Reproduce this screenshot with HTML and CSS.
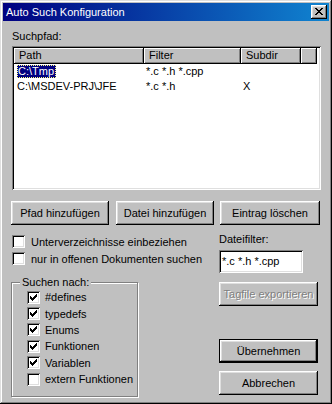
FILE: index.html
```html
<!DOCTYPE html>
<html lang="de">
<head>
    <meta charset="UTF-8">
    <title>Auto Such Konfiguration</title>
    <link rel="stylesheet" href="styles.css">
</head>
<body>

    <div class="window">
        <div class="titlebar">
            <span class="title">Auto Such Konfiguration</span>
            <button class="close-btn" aria-label="Schließen">
                <svg width="8" height="7" viewBox="0 0 8 7" shape-rendering="crispEdges">
                    <path d="M0 0h2v1h1v1h2v-1h1v-1h2v1h-1v1h-1v1h-1v1h1v1h1v1h1v1h-2v-1h-1v-1h-2v1h-1v1h-2v-1h1v-1h1v-1h1v-1h-1v-1h-1v-1h-1z" fill="#000"/>
                </svg>
            </button>
        </div>

        <div class="content">
            <div class="label">Suchpfad:</div>

            <div class="listview">
                <div class="lv-header">
                    <div class="lv-col col-path">Path</div>
                    <div class="lv-col col-filter">Filter</div>
                    <div class="lv-col col-subdir">Subdir</div>
                    <div class="lv-col col-rest"></div>
                </div>
                <div class="lv-row">
                    <div class="lv-cell col-path"><span class="selected">C:\Tmp</span></div>
                    <div class="lv-cell col-filter">*.c *.h *.cpp</div>
                    <div class="lv-cell col-subdir"></div>
                </div>
                <div class="lv-row">
                    <div class="lv-cell col-path">C:\MSDEV-PRJ\JFE</div>
                    <div class="lv-cell col-filter">*.c *.h</div>
                    <div class="lv-cell col-subdir">X</div>
                </div>
            </div>

            <div class="button-row">
                <button class="btn btn-pfad">Pfad hinzufügen</button>
                <button class="btn btn-datei">Datei hinzufügen</button>
                <button class="btn btn-loeschen">Eintrag löschen</button>
            </div>

            <div class="lower">
                <div class="left-col">
                    <label class="check"><span class="box"></span>Unterverzeichnisse einbeziehen</label>
                    <label class="check"><span class="box"></span>nur in offenen Dokumenten suchen</label>

                    <div class="group">
                        <span class="group-title">Suchen nach:</span>
                        <label class="check"><span class="box checked"></span>#defines</label>
                        <label class="check"><span class="box checked"></span>typedefs</label>
                        <label class="check"><span class="box checked"></span>Enums</label>
                        <label class="check"><span class="box checked"></span>Funktionen</label>
                        <label class="check"><span class="box checked"></span>Variablen</label>
                        <label class="check"><span class="box"></span>extern Funktionen</label>
                    </div>
                </div>

                <div class="right-col">
                    <div class="label">Dateifilter:</div>
                    <div class="textbox">*.c *.h *.cpp</div>
                    <button class="btn btn-tagfile" disabled>Tagfile exportieren</button>
                    <button class="btn btn-default">Übernehmen</button>
                    <button class="btn btn-abbrechen">Abbrechen</button>
                </div>
            </div>
        </div>
    </div>

</body>
</html>
```

FILE: styles.css
```css
body {
    margin: 0;
    padding: 0;
    font-family: "Liberation Sans", Arial, sans-serif;
    font-size: 11px;
    color: #000;
    background-color: #c0c0c0;
}
.window {
    width: 332px;
    height: 404px;
    box-sizing: border-box;
    padding: 3px;
    background-color: #c0c0c0;
    box-shadow: inset -1px -1px #000, inset 1px 1px #dfdfdf,
                inset -2px -2px #808080, inset 2px 2px #fff;
}
.titlebar {
    height: 18px;
    display: flex;
    align-items: center;
    justify-content: space-between;
    padding: 0 2px 0 3px;
    background: linear-gradient(to right, #000080, #1084d0);
    color: #fff;
}
.title {
    font-size: 11px;
    line-height: 13px;
}
.close-btn {
    width: 16px;
    height: 14px;
    padding: 0;
    border: none;
    background-color: #c0c0c0;
    display: flex;
    align-items: center;
    justify-content: center;
    box-shadow: inset -1px -1px #000, inset 1px 1px #fff,
                inset -2px -2px #808080, inset 2px 2px #dfdfdf;
}
.close-btn svg {
    margin: 0 0 1px 0;
}
.content {
    padding: 9px 8px 0 9px;
}
.label {
    line-height: 13px;
}
/* List view */
.listview {
    width: 309px;
    height: 144px;
    box-sizing: border-box;
    margin-top: 3px;
    padding: 2px;
    background-color: #fff;
    box-shadow: inset 1px 1px #808080, inset -1px -1px #fff,
                inset 2px 2px #000, inset -2px -2px #dfdfdf;
}
.lv-header {
    display: flex;
    height: 16px;
}
.lv-col {
    box-sizing: border-box;
    height: 16px;
    line-height: 14px;
    padding-left: 5px;
    background-color: #c0c0c0;
    box-shadow: inset -1px -1px #000, inset 1px 1px #fff,
                inset -2px -2px #808080;
}
.col-path {
    width: 130px;
}
.col-filter {
    width: 97px;
}
.col-subdir {
    width: 60px;
}
.col-rest {
    width: 16px;
}
.lv-row {
    display: flex;
    height: 15px;
    line-height: 15px;
}
.lv-cell {
    box-sizing: border-box;
    padding-left: 3px;
    white-space: nowrap;
}
.lv-cell.col-filter, .lv-cell.col-subdir {
    padding-left: 2px;
}
.selected {
    display: inline-block;
    line-height: 13px;
    padding: 0 2px 0 1px;
    background-color: #000080;
    color: #fff;
    outline: 1px dotted #ffff80;
    outline-offset: -1px;
}
/* Buttons */
.btn {
    box-sizing: border-box;
    height: 24px;
    padding: 0;
    border: none;
    background-color: #c0c0c0;
    font-family: "Liberation Sans", Arial, sans-serif;
    font-size: 11px;
    color: #000;
    box-shadow: inset -1px -1px #000, inset 1px 1px #fff,
                inset -2px -2px #808080, inset 2px 2px #dfdfdf;
}
.btn:disabled {
    color: #808080;
    text-shadow: 1px 1px #fff;
}
.button-row {
    display: flex;
    margin-top: 11px;
    margin-left: -1px;
}
.btn-pfad {
    width: 98px;
}
.btn-datei {
    width: 98px;
    margin-left: 7px;
}
.btn-loeschen {
    width: 100px;
    margin-left: 6px;
}
/* Lower area */
.lower {
    display: flex;
}
.left-col {
    width: 127px;
    margin-left: -1px;
    padding-top: 8px;
}
.right-col {
    display: flex;
    flex-direction: column;
    margin-left: 81px;
    padding-top: 8px;
}
.check {
    display: flex;
    align-items: center;
    height: 17px;
    white-space: nowrap;
}
.box {
    width: 13px;
    height: 13px;
    box-sizing: border-box;
    margin: 0 6px 0 1px;
    flex-shrink: 0;
    background-color: #fff;
    box-shadow: inset 1px 1px #808080, inset -1px -1px #fff,
                inset 2px 2px #000, inset -2px -2px #dfdfdf;
}
.box.checked {
    background-image: url("data:image/svg+xml,%3Csvg xmlns='http://www.w3.org/2000/svg' width='7' height='7' shape-rendering='crispEdges'%3E%3Cpath d='M0 2h1v3h-1zM1 3h1v3h-1zM2 4h1v3h-1zM3 3h1v3h-1zM4 2h1v3h-1zM5 1h1v3h-1zM6 0h1v3h-1z' fill='%23000'/%3E%3C/svg%3E");
    background-repeat: no-repeat;
    background-position: 3px 3px;
}
.group {
    margin-top: 15px;
    height: 115px;
    box-sizing: border-box;
    padding: 0 0 0 14px;
    border: 1px solid #808080;
    box-shadow: inset 1px 1px #fff, 1px 1px #fff;
}
.group-title {
    display: block;
    width: fit-content;
    margin: -7px 0 0 -6px;
    padding: 0 2px;
    line-height: 13px;
    background-color: #c0c0c0;
}
.group .check {
    height: 16.4px;
}
.group .check .box {
    margin-right: 5px;
}
.textbox {
    width: 84px;
    height: 23px;
    box-sizing: border-box;
    margin-top: 4px;
    padding: 4px 3px;
    line-height: 15px;
    background-color: #fff;
    box-shadow: inset 1px 1px #808080, inset -1px -1px #fff,
                inset 2px 2px #000, inset -2px -2px #dfdfdf;
}
.btn-tagfile {
    width: 99px;
    margin-top: 9px;
}
.btn-default {
    width: 99px;
    margin-top: 33px;
    border: 1px solid #000;
}
.btn-abbrechen {
    width: 99px;
    margin-top: 8px;
}
```
